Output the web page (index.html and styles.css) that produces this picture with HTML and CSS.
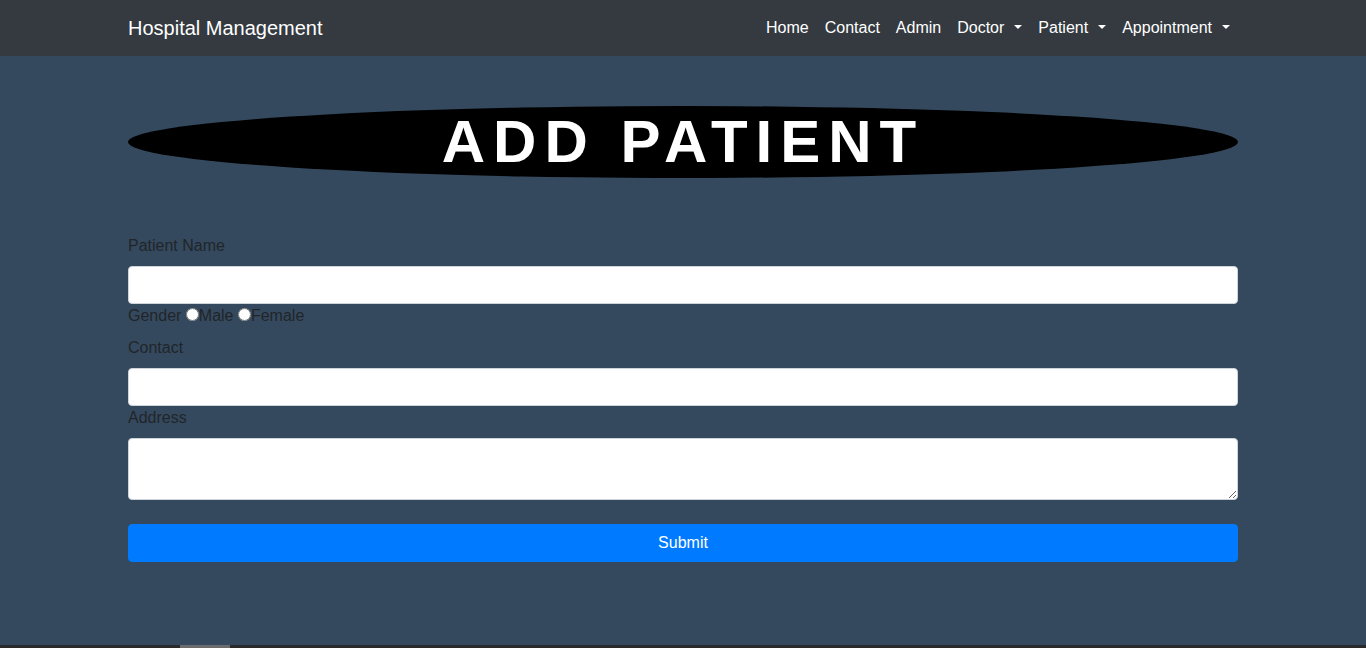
FILE: index.html
```html
<!DOCTYPE html>
<html lang="en">
<head>
<meta charset="utf-8">
<title>Add Patient</title>
<link rel="stylesheet" href="styles.css">
</head>
<body>
<div class="page">
  <nav class="navbar">
    <div class="container nav-inner">
      <a class="brand" href="#">Hospital Management</a>
      <ul class="nav">
        <li><a class="nav-link" href="#">Home</a></li>
        <li><a class="nav-link" href="#">Contact</a></li>
        <li><a class="nav-link" href="#">Admin</a></li>
        <li><a class="nav-link dropdown" href="#">Doctor</a></li>
        <li><a class="nav-link dropdown" href="#">Patient</a></li>
        <li><a class="nav-link dropdown" href="#">Appointment</a></li>
      </ul>
    </div>
  </nav>
  <main class="container main">
    <h1 class="title">ADD PATIENT</h1>
    <form class="form">
      <div class="group">
        <label class="label">Patient Name</label>
        <input class="control" type="text">
      </div>
      <div class="gender">Gender <input type="radio" name="g" class="radio">Male <input type="radio" name="g" class="radio">Female</div>
      <div class="group contact">
        <label class="label">Contact</label>
        <input class="control" type="text">
      </div>
      <div class="group">
        <label class="label">Address</label>
        <textarea class="control area" rows="2"></textarea>
      </div>
      <button class="btn" type="button">Submit</button>
    </form>
  </main>
  <div class="scrollbar"><div class="thumb"></div></div>
</div>
</body>
</html>
```
FILE: styles.css
```css
* { box-sizing: border-box; }
html, body { margin: 0; padding: 0; }
body {
  font-family: "Liberation Sans", Arial, sans-serif;
  font-size: 16px;
  line-height: 1.5;
  color: #212529;
  background: #34495e;
  overflow: hidden;
}
.page { height: 648px; display: flex; flex-direction: column; }
.container { width: 1140px; margin: 0 auto; padding: 0 15px; }
.navbar { background: #343a40; height: 56px; flex: none; }
.nav-inner { height: 56px; display: flex; align-items: center; justify-content: space-between; }
.brand {
  color: #fff; text-decoration: none; font-size: 20px; line-height: 30px;
  padding: 5px 0;
}
.nav { list-style: none; margin: 0; padding: 0; display: flex; }
.nav-link {
  display: block; color: #fff; text-decoration: none;
  padding: 8px; line-height: 24px; font-size: 16px;
}
.dropdown::after {
  content: ""; display: inline-block; margin-left: 10px; vertical-align: 0.255em;
  border-top: 0.3em solid #fff; border-left: 0.3em solid transparent; border-right: 0.3em solid transparent;
}
.main { flex: 1; padding-top: 50px; }
.title {
  margin: 0; background: #000; color: #fff; border-radius: 50%;
  text-align: center; font-size: 60px; line-height: 72px; font-weight: 700;
  letter-spacing: 8px; height: 72px;
}
.form { margin-top: 56px; }
.label { display: block; margin-bottom: 8px; }
.control {
  display: block; width: 100%; height: 38px; padding: 6px 12px;
  font-size: 16px; line-height: 24px; font-family: inherit; color: #495057;
  background: #fff; border: 1px solid #ced4da; border-radius: 4px;
}
.area { height: 62px; resize: vertical; }
.gender { line-height: 24px; }
.radio { margin: 0; width: 13px; height: 13px; vertical-align: 0; }
.contact { margin-top: 8px; }
.group:last-of-type { margin-bottom: 24px; }
.btn {
  display: block; width: 100%; height: 38px; background: #007bff; color: #fff;
  border: 1px solid #007bff; border-radius: 4px; font-size: 16px; line-height: 24px;
  font-family: inherit; padding: 6px 12px;
}
.scrollbar { height: 3px; background: #2a2a2a; flex: none; position: relative; }
.thumb { position: absolute; left: 180px; top: 0; width: 50px; height: 3px; background: #6b6b6b; }
```
